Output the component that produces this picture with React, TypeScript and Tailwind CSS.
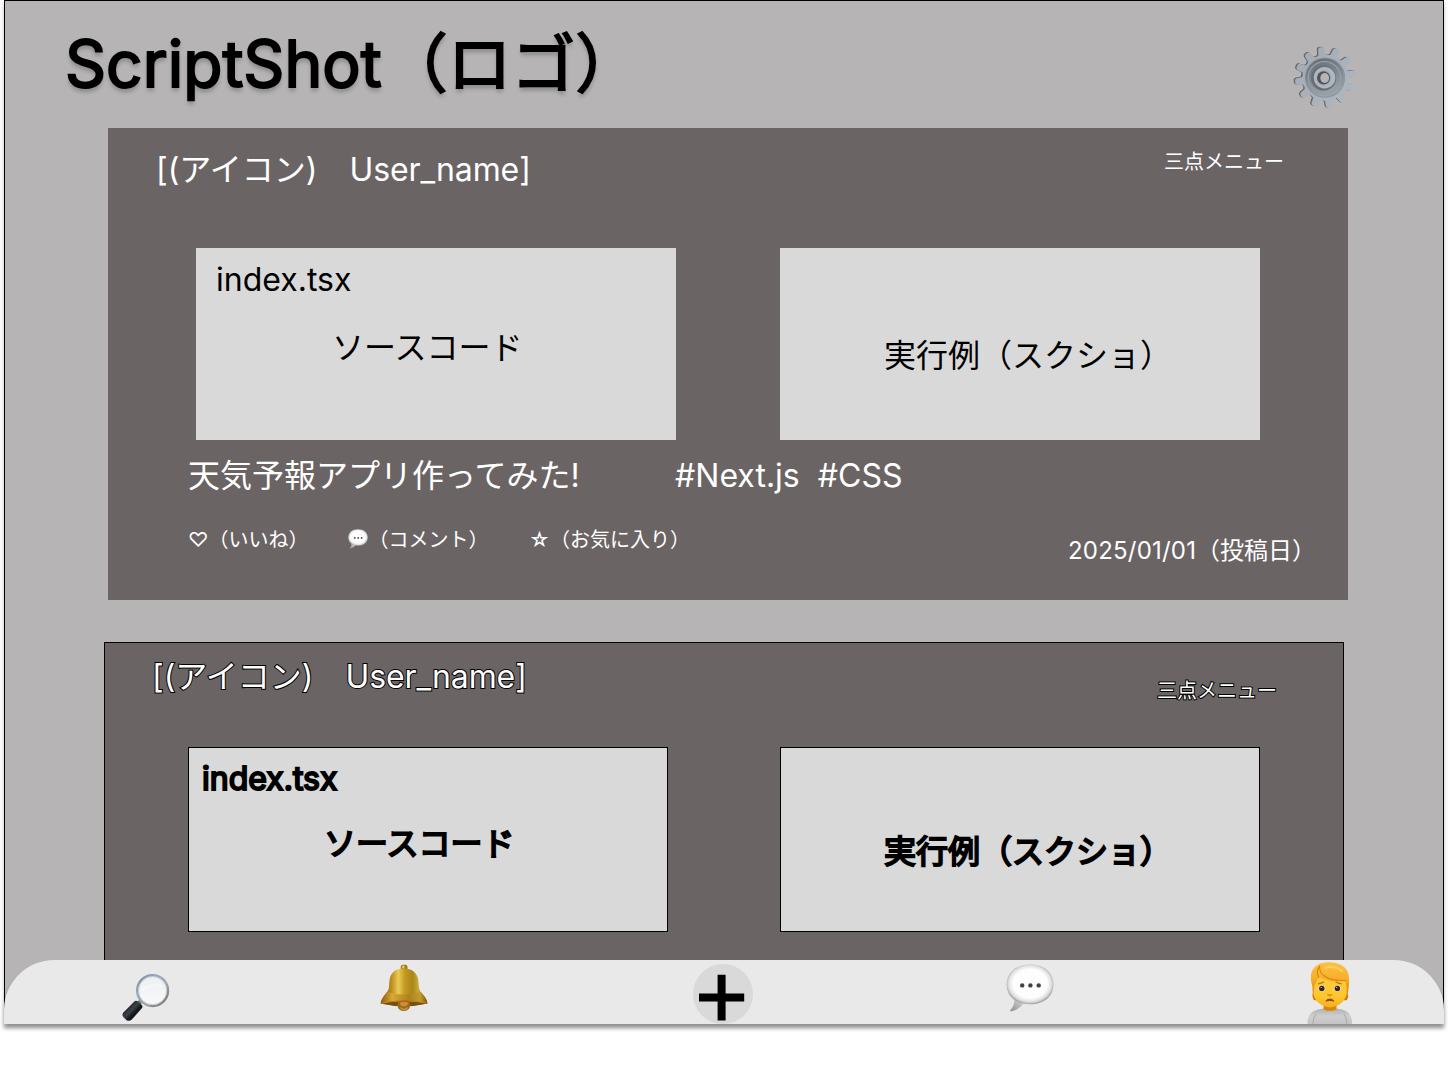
import type { ReactNode } from 'react';

const TOOTH_ANGLES = Array.from({ length: 12 }, (_, i) => 22 + i * 30);

function gearPath(cx: number, cy: number) {
  const point = (radius: number, degrees: number) => {
    const a = (degrees * Math.PI) / 180;
    return `${(cx + radius * Math.cos(a)).toFixed(2)} ${(cy + radius * Math.sin(a)).toFixed(2)}`;
  };
  return (
    TOOTH_ANGLES.map((a, i) =>
      [
        `${i === 0 ? 'M' : 'L'}${point(23.4, a - 9)}`,
        `L${point(28.6, a - 6.6)}`,
        `Q${point(30.8, a - 5.4)} ${point(30.6, a)}`,
        `Q${point(30.8, a + 5.4)} ${point(28.6, a + 6.6)}`,
        `L${point(23.4, a + 9)}`,
        `Q${point(21.8, a + 15)} ${point(23.4, a + 21)}`,
      ].join(' '),
    ).join(' ') + 'Z'
  );
}

function GearIcon() {
  return (
    <svg viewBox="0 0 90 90" className="size-[90px]" aria-label="設定">
      <defs>
        <linearGradient id="gearFace" x1="0" y1="0" x2="1" y2="1">
          <stop offset="0" stopColor="#a1a9b3" />
          <stop offset="0.5" stopColor="#a9b1ba" />
          <stop offset="1" stopColor="#b0b7c0" />
        </linearGradient>
        <linearGradient id="gearDish" x1="0" y1="0" x2="0.3" y2="1">
          <stop offset="0" stopColor="#646b73" />
          <stop offset="0.5" stopColor="#7c848d" />
          <stop offset="1" stopColor="#9aa2aa" />
        </linearGradient>
      </defs>
      <path d={gearPath(44, 47.1)} fill="#55595f" />
      <path d={gearPath(44.6, 47.4)} fill="#74777b" />
      <path d={gearPath(45.4, 47.6)} fill="url(#gearFace)" />
      <circle cx="45" cy="47.6" r="20.2" fill="#8d959e" />
      <circle cx="44.8" cy="47.6" r="19.2" fill="url(#gearDish)" />
      <circle cx="44.4" cy="47.8" r="16.2" fill="none" stroke="#969ea6" strokeWidth="1.4" />
      <circle cx="43.6" cy="48" r="12.6" fill="#676e76" />
      <circle cx="44.6" cy="47.7" r="10.8" fill="#afb6bf" />
      <circle cx="44" cy="47.8" r="7.6" fill="#a3abb4" />
      <circle cx="43.6" cy="47.8" r="6.6" fill="#4d545c" />
      <ellipse cx="44.7" cy="48" rx="4.4" ry="5" fill="#b6b4b5" />
    </svg>
  );
}

function SearchIcon() {
  return (
    <svg viewBox="0 0 48 48" className="size-12 overflow-visible" aria-label="検索">
      <defs>
        <linearGradient id="lensRim" x1="0" y1="0" x2="1" y2="1">
          <stop offset="0" stopColor="#7b838c" />
          <stop offset="0.3" stopColor="#8fa9c8" />
          <stop offset="0.6" stopColor="#a3a4a8" />
          <stop offset="1" stopColor="#6d6b6e" />
        </linearGradient>
        <linearGradient id="lensGlass" x1="0" y1="0" x2="0" y2="1">
          <stop offset="0" stopColor="#eceef0" />
          <stop offset="1" stopColor="#fafafa" />
        </linearGradient>
        <linearGradient id="handle" x1="0" y1="0" x2="1" y2="1">
          <stop offset="0.2" stopColor="#0d0f11" />
          <stop offset="0.45" stopColor="#3e4449" />
          <stop offset="0.6" stopColor="#16181a" />
          <stop offset="1" stopColor="#050505" />
        </linearGradient>
      </defs>
      <path d="M15.5 31.5 20 27" stroke="#77777b" strokeWidth="4" />
      <path d="M12.4 28.4Q14 27 16 28.6L20 32.2Q21 34 19.6 35.6L9.8 46.6Q7.4 48.8 4.6 47.2L1.2 44Q-0.4 41.6 1.4 39.4Z" fill="url(#handle)" />
      <circle cx="30.6" cy="17.6" r="15.5" fill="url(#lensGlass)" stroke="url(#lensRim)" strokeWidth="2.2" />
      <circle cx="30.6" cy="17.6" r="14.1" fill="none" stroke="#bfc2c6" strokeWidth="0.9" />
      <path d="M20 17Q31 9 41 14" stroke="#fff" strokeWidth="2" fill="none" opacity="0.4" />
    </svg>
  );
}

function BellIcon() {
  return (
    <svg viewBox="0 0 48 48" className="size-12" aria-label="通知">
      <defs>
        <linearGradient id="bellBody" x1="0" y1="0" x2="1" y2="0">
          <stop offset="0" stopColor="#8f6410" />
          <stop offset="0.22" stopColor="#b98a1c" />
          <stop offset="0.38" stopColor="#ecca55" />
          <stop offset="0.52" stopColor="#c3981f" />
          <stop offset="0.68" stopColor="#a8871b" />
          <stop offset="0.8" stopColor="#c9a832" />
          <stop offset="1" stopColor="#7a5610" />
        </linearGradient>
        <linearGradient id="bellRim" x1="0" y1="0" x2="1" y2="0">
          <stop offset="0" stopColor="#8a5b0e" />
          <stop offset="0.25" stopColor="#d9a833" />
          <stop offset="0.6" stopColor="#ad821c" />
          <stop offset="0.85" stopColor="#c59a2b" />
          <stop offset="1" stopColor="#7d5210" />
        </linearGradient>
      </defs>
      <rect x="20.7" y="0.8" width="6.8" height="6" rx="2.2" fill="#a37a1a" />
      <rect x="22" y="1.4" width="2.6" height="3" rx="1" fill="#e6c552" />
      <path d="M23.8 4.6C15.6 4.6 11.2 8.8 9.8 14.4C8.8 19 9.6 23.6 8 26.6C6 30 1.4 33.6 0.7 39.6Q12 42 24 42T47.4 39.6C46.8 33.6 41.6 30 39.8 26.6C38.2 23.6 39 19 38 14.4C36.4 8.8 32 4.6 23.8 4.6Z" fill="url(#bellBody)" />
      <path d="M7 27.9Q24 33 41 27.9C43.4 31 47 34.4 47.4 39.6Q36 36.6 24 36.6T0.7 39.6C1.2 34.4 5 31 7 27.9Z" fill="url(#bellRim)" />
      <path d="M0.7 39.4Q11 36.4 24 36.4T47.4 39.4Q36 42.2 24 42.2T0.7 39.4Z" fill="#77500c" />
      <path d="M2 39Q12 37 24 37T46.2 39" fill="none" stroke="#c7962c" strokeWidth="0.8" />
      <path d="M17.6 40Q18 36.8 23.8 36.8T30.2 40Q30.4 47 23.8 47T17.6 40Z" fill="#9a6a1b" />
      <path d="M19.6 39.8Q20 37.8 24 37.8T28.4 39.8Q27 42.4 24 42.4T19.6 39.8Z" fill="#d4883a" />
      <path d="M20.5 43.6Q24 47 27.7 43.6" stroke="#cfa545" strokeWidth="1.2" fill="none" />
    </svg>
  );
}

function SpeechIcon({ className }: { className: string }) {
  return (
    <svg viewBox="0 0 48 48" className={className} aria-label="コメント">
      <defs>
        <radialGradient id="bubble" cx="0.5" cy="0.48" r="0.52">
          <stop offset="0" stopColor="#ffffff" />
          <stop offset="0.7" stopColor="#fdfdfd" />
          <stop offset="0.87" stopColor="#e2e2e2" />
          <stop offset="0.95" stopColor="#c0c0c0" />
          <stop offset="1" stopColor="#a0a0a0" />
        </radialGradient>
        <linearGradient id="bubbleTail" x1="1" y1="0" x2="0" y2="1">
          <stop offset="0" stopColor="#dcdcdc" />
          <stop offset="1" stopColor="#8f8f8f" />
        </linearGradient>
      </defs>
      <path d="M8.5 35Q8.6 42 4.2 46.2Q3.8 47.6 5.6 47.2Q13.6 45.6 18.6 38.2Z" fill="url(#bubbleTail)" />
      <path d="M24 0.6C38.6 0.6 47.4 9 47.4 20.4S38.6 40.2 24 40.2S0.6 31.8 0.6 20.4S9.4 0.6 24 0.6Z" fill="url(#bubble)" />
      <circle cx="16.2" cy="21.4" r="2.2" fill="#424242" />
      <circle cx="24.4" cy="21.4" r="2.2" fill="#424242" />
      <circle cx="32.7" cy="21.4" r="2.2" fill="#424242" />
    </svg>
  );
}

function PersonIcon() {
  return (
    <svg viewBox="0 0 46 62" className="h-[62px] w-[46px]" aria-label="プロフィール">
      <defs>
        <linearGradient id="shirt" x1="0" y1="0" x2="0" y2="1">
          <stop offset="0" stopColor="#b0b0b2" />
          <stop offset="0.5" stopColor="#cececf" />
          <stop offset="1" stopColor="#c4c4c6" />
        </linearGradient>
        <linearGradient id="hair" x1="0" y1="0" x2="0" y2="1">
          <stop offset="0" stopColor="#fcc043" />
          <stop offset="0.4" stopColor="#f8b02c" />
          <stop offset="0.7" stopColor="#e5950f" />
          <stop offset="1" stopColor="#c87806" />
        </linearGradient>
        <linearGradient id="skin" x1="0" y1="0" x2="0" y2="1">
          <stop offset="0" stopColor="#fdc93e" />
          <stop offset="0.6" stopColor="#fec72f" />
          <stop offset="1" stopColor="#f5b01f" />
        </linearGradient>
      </defs>
      <path d="M0.4 62Q0.4 50 11 47.6Q17 46.2 23 46.2T35 47.6Q45.2 50 45.2 62Z" fill="url(#shirt)" />
      <path d="M6 62Q6 55 9 52M39.8 62Q39.8 55 37 52" stroke="#a2a2a5" strokeWidth="0.8" fill="none" />
      <path d="M16.5 42H29.5V47.4Q23 50.4 16.5 47.4Z" fill="#d9870a" />
      <path d="M5.4 25Q3.2 17 4.2 11.4Q6.5 3.4 15 1Q24 -1 33.5 2.6Q42.4 7 42.2 19Q41.8 27 40.8 31Q42 36 39.6 38.2L7 38.2Q4.6 35 5.8 31Z" fill="url(#hair)" />
      <path d="M7.2 24Q10 18 12.4 15Q20 20.4 38.2 18.8Q40.4 26 39.6 32Q38.4 37.8 33.6 41.6Q28.4 45.4 23 45.4T12.4 41.6Q7.4 37.8 6.6 32Z" fill="url(#skin)" />
      <path d="M12 15.6Q8.4 9.6 12.6 4.4Q12.2 10.4 17.4 14Q25 19.4 38.6 18.6" stroke="#d98509" strokeWidth="1.1" fill="none" />
      <path d="M17.5 6Q27 2.4 36 9.4" stroke="#ffd777" strokeWidth="2.2" fill="none" opacity="0.65" />
      <path d="M11 21.8Q14.4 21.6 17 19.8M34.6 21.8Q31 21.6 28.6 19.8" stroke="#b9720d" strokeWidth="1.2" fill="none" />
      <ellipse cx="14.8" cy="26.4" rx="3.8" ry="2.9" fill="#e9dfc4" />
      <ellipse cx="30.4" cy="26.4" rx="3.8" ry="2.9" fill="#e9dfc4" />
      <circle cx="14.8" cy="26.4" r="2.7" fill="#35231a" />
      <circle cx="30.4" cy="26.4" r="2.7" fill="#35231a" />
      <circle cx="14.2" cy="25.5" r="0.6" fill="#fff" />
      <circle cx="29.8" cy="25.5" r="0.6" fill="#fff" />
      <path d="M20.4 32.4Q22.6 34.4 25 32.4" stroke="#dc9109" strokeWidth="1.5" fill="none" />
      <path d="M18.8 39.2Q19.6 37 22.8 37T26.8 39.2Q22.8 37.6 18.8 39.2Z" fill="#87420b" stroke="#87420b" strokeWidth="0.8" />
    </svg>
  );
}

function PlusButton() {
  return (
    <button className="flex size-[60px] items-center justify-center rounded-full bg-[#d9d9d9]" aria-label="投稿">
      <svg viewBox="0 0 60 60" className="size-[60px]">
        <path d="M24.6 10.8H32.6V29.4H51.2V37.6H32.6V56.6H24.6V37.6H6V29.4H24.6Z" fill="#000" />
      </svg>
    </button>
  );
}

function Panel({ className, children }: { className: string; children: ReactNode }) {
  return <div className={`w-[480px] bg-[#d9d9d9] text-[32px] leading-[39px] text-black ${className}`}>{children}</div>;
}

export default function App() {
  return (
    <div className="flex h-[1065px] w-[1448px] justify-center overflow-hidden bg-white font-['Inter','Noto_Sans_CJK_JP',sans-serif] whitespace-pre">
      <div className="relative h-[1024px] w-[1440px] shadow-[0_4px_4px_rgba(0,0,0,0.25)]">
        <main className="h-full overflow-hidden border border-black bg-[#b6b4b5]">
          <header className="flex h-[127px] items-start justify-between pr-[73px] pl-[60px]">
            <h1 className="pt-[24px] text-[64px] leading-[77px] [-webkit-text-stroke:2px_#000] [text-shadow:0_4px_4px_rgba(0,0,0,0.25)]">
              ScriptShot<span className="ml-[2px]">（ロゴ）</span>
            </h1>
            <div className="pt-[29px]">
              <GearIcon />
            </div>
          </header>

          <article className="ml-[103px] h-[472px] w-[1240px] bg-[#6b6464] text-white">
            <div className="flex h-[120px] items-start justify-between pr-[64px] pl-[48px]">
              <p className="pt-[22px] text-[32px] leading-[39px]">
                [(アイコン)　<span className="tracking-[-0.1px]">User_name]</span>
              </p>
              <p className="pt-[22px] text-[20px] leading-[24px]">三点メニュー</p>
            </div>
            <div className="flex gap-[104px] pl-[88px]">
              <Panel className="h-[192px] pt-[12px]">
                <p className="pl-[20px]">index.tsx</p>
                <p className="pt-[29px] pl-[136px]">ソースコード</p>
              </Panel>
              <Panel className="h-[192px] pt-[88px] pl-[104px]">
                <p>実行例（スクショ）</p>
              </Panel>
            </div>
            <div className="flex pt-[16px] pl-[80px] text-[32px] leading-[39px]">
              <p className="w-[487px]">天気予報アプリ作ってみた!</p>
              <p>#Next.js  #CSS</p>
            </div>
            <div className="flex items-start pl-[80px] text-[20px] leading-[24px]">
              <p className="w-[160px] pt-[33px]">♡（いいね）</p>
              <p className="flex w-[181px] pt-[33px]">
                <SpeechIcon className="mt-px mr-[0.5px] size-[20px]" />
                （コメント）
              </p>
              <p className="w-[539px] pt-[33px]">☆（お気に入り）</p>
              <p className="pt-[41px] text-[24px] leading-[29px]">
                <span className="tracking-[0.2px]">2025/01/01</span>（投稿日）
              </p>
            </div>
          </article>

          <article className="mt-[42px] ml-[99px] h-[472px] w-[1240px] border border-black bg-[#6b6464] text-white">
            <div className="flex h-[104px] items-start justify-between pr-[66px] pl-[47px] [-webkit-text-stroke:2px_#000] [paint-order:stroke_fill]">
              <p className="pt-[14px] text-[32px] leading-[39px]">
                [(アイコン)　<span className="tracking-[-0.1px]">User_name]</span>
              </p>
              <p className="pt-[36px] text-[20px] leading-[24px]">三点メニュー</p>
            </div>
            <div className="flex gap-[112px] pl-[83px] [-webkit-text-stroke:2px_#000]">
              <Panel className="h-[185px] border border-black pt-[11px]">
                <p className="pl-[13px]">index.tsx</p>
                <p className="pt-[26px] pl-[135px]">ソースコード</p>
              </Panel>
              <Panel className="h-[185px] border border-black pt-[84px] pl-[103px]">
                <p>実行例（スクショ）</p>
              </Panel>
            </div>
          </article>
        </main>

        <nav className="absolute bottom-0 left-0 flex h-[64px] w-full items-start rounded-t-[50px] bg-[#e9e9e9] pl-[118px] shadow-[0_4px_4px_rgba(0,0,0,0.25)]">
          <div className="w-[258px] pt-[13px]">
            <SearchIcon />
          </div>
          <div className="w-[313px] pt-[4px]">
            <BellIcon />
          </div>
          <div className="w-[313px] pt-[4px]">
            <PlusButton />
          </div>
          <div className="w-[301px] pt-[4px]">
            <SpeechIcon className="size-12" />
          </div>
          <div className="pt-[2px]">
            <PersonIcon />
          </div>
        </nav>
      </div>
    </div>
  );
}
